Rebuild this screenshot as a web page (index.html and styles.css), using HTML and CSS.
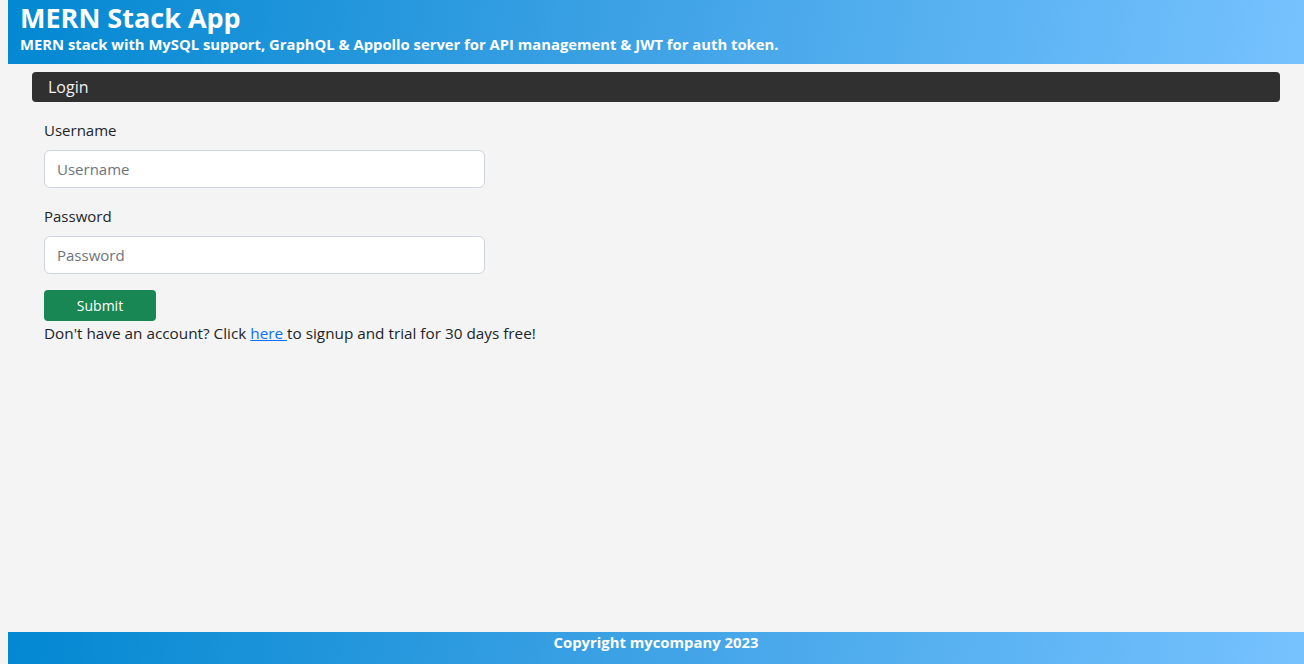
FILE: index.html
```html
<!DOCTYPE html>
<html lang="en">
<head>
<meta charset="utf-8">
<title>MERN Stack App</title>
<link rel="stylesheet" href="styles.css">
</head>
<body>
<div class="page">
  <header class="app-header">
    <h1 class="app-title">MERN Stack App</h1>
    <p class="app-subtitle">MERN stack with MySQL support, GraphQL &amp; Appollo server for API management &amp; JWT for auth token.</p>
  </header>
  <main class="main">
    <div class="card-head">Login</div>
    <form class="login-form">
      <div class="field">
        <label class="field-label" for="username">Username</label>
        <input class="field-input" id="username" type="text" placeholder="Username">
      </div>
      <div class="field">
        <label class="field-label" for="password">Password</label>
        <input class="field-input" id="password" type="password" placeholder="Password">
      </div>
      <button class="btn-submit" type="button">Submit</button>
      <p class="signup-note">Don't have an account? Click <a href="#" class="signup-link">here </a>to signup and trial for 30 days free!</p>
    </form>
  </main>
  <footer class="app-footer">Copyright mycompany 2023</footer>
</div>
</body>
</html>
```
FILE: styles.css
```css
* { box-sizing: border-box; }
html, body { height: 100%; }
body {
  margin: 0;
  padding-left: 8px;
  background: #f4f4f4;
  font-family: "Open Sans", "Noto Sans", sans-serif;
  color: #212529;
}
.page {
  min-height: 100%;
  display: flex;
  flex-direction: column;
}
.app-header {
  height: 64px;
  padding: 2px 12px 0;
  background: linear-gradient(100deg, #0288d1 0%, #3aa0e4 45%, #76c2fe 100%);
  color: #fff;
}
.app-title {
  margin: 0;
  font-size: 27px;
  line-height: 32px;
  font-weight: 700;
}
.app-subtitle {
  margin: 0;
  font-size: 14.8px;
  line-height: 20px;
  font-weight: 700;
}
.main {
  flex: 1;
  padding: 8px 24px 0;
}
.card-head {
  height: 30px;
  padding: 0 16px;
  line-height: 31px;
  background: #303030;
  color: #f0f0f0;
  border-radius: 4px;
  font-size: 16px;
}
.login-form {
  padding: 16px 12px 0;
}
.field { margin-bottom: 16px; }
.field-label {
  display: block;
  font-size: 15px;
  line-height: 24px;
  margin-bottom: 8px;
}
.field-input {
  display: block;
  width: 441px;
  height: 38px;
  padding: 6px 12px;
  border: 1px solid #ced4da;
  border-radius: 6px;
  background: #fff;
  font: inherit;
  font-size: 15px;
  color: #212529;
}
.field-input::placeholder { color: #6c757d; }
.btn-submit {
  display: block;
  width: 112px;
  height: 31px;
  border: 0;
  border-radius: 4px;
  background: #198754;
  color: #fff;
  font: inherit;
  font-size: 14px;
}
.signup-note {
  margin: 0;
  font-size: 15.3px;
  line-height: 24px;
}
.signup-link { color: #0d6efd; }
.app-footer {
  height: 32px;
  padding-top: 0;
  background: linear-gradient(100deg, #0288d1 0%, #3aa0e4 45%, #76c2fe 100%);
  color: #fff;
  text-align: center;
  font-weight: 700;
  font-size: 14.85px;
  line-height: 20px;
}
```
